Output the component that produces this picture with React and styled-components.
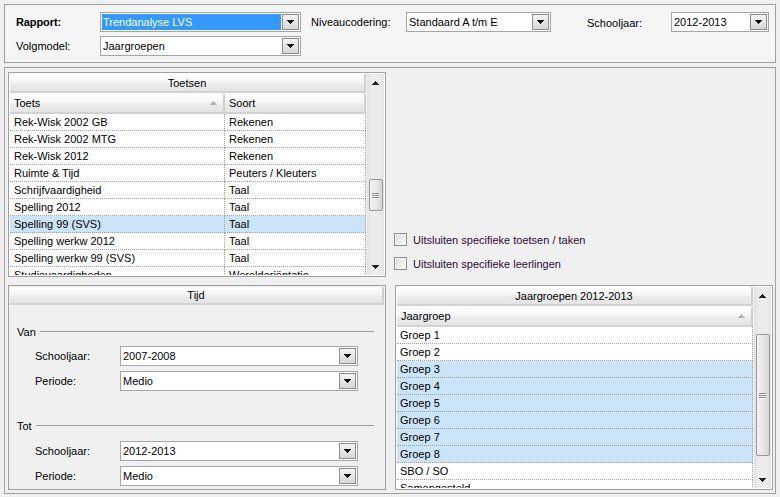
import React from 'react';
import styled, { createGlobalStyle } from 'styled-components';

const GlobalStyle = createGlobalStyle`
  html, body {
    margin: 0;
    padding: 0;
    background: #f0f0f0;
  }
  body {
    font-family: "Liberation Sans", Arial, sans-serif;
    font-size: 11px;
    color: #000;
  }
`;

const Page = styled.div`
  width: 780px;
  height: 497px;
  box-sizing: border-box;
  padding: 4px 4px 3px 4px;
  display: flex;
  flex-direction: column;
  gap: 4px;
  overflow: hidden;
`;

const TopPanel = styled.div`
  height: 59px;
  flex: none;
  box-sizing: border-box;
  border: 1px solid #a0a0a0;
  background: #f5f5f5;
  padding: 7px 0 0 11px;
  display: flex;
  flex-direction: column;
  gap: 4px;
`;

const FieldRow = styled.div`
  display: flex;
  align-items: center;
  height: 20px;
`;

const FieldLabel = styled.span`
  flex: none;
  width: ${p => p.$w}px;
  margin-left: ${p => p.$ml || 0}px;
  margin-top: ${p => p.$mt || 0}px;
  font-weight: ${p => (p.$bold ? 700 : 400)};
  letter-spacing: ${p => (p.$bold ? '-0.1px' : '0')};
  white-space: nowrap;
`;

const ComboBox = styled.div`
  flex: none;
  width: ${p => p.$w}px;
  height: 20px;
  box-sizing: border-box;
  border: 1px solid #a5a5a5;
  background: #fff;
  padding: 1px;
  display: flex;
  gap: 1px;
`;

const ComboText = styled.div`
  flex: 1;
  min-width: 0;
  padding-left: 1px;
  line-height: 16px;
  white-space: nowrap;
  overflow: hidden;
  background: ${p => (p.$selected ? '#3399ff' : 'transparent')};
  color: ${p => (p.$selected ? '#fff' : '#000')};
`;

const ComboButton = styled.div`
  width: 17px;
  height: 16px;
  flex: none;
  box-sizing: border-box;
  border: 1px solid #8c8c8c;
  background: linear-gradient(to bottom, #f4f4f4, #e6e6e6 50%, #d6d6d6);
  display: flex;
  align-items: center;
  justify-content: center;
`;

const MainPanel = styled.div`
  flex: 1;
  box-sizing: border-box;
  border: 1px solid #a0a0a0;
  padding: 4px 2px 2px 3px;
  display: grid;
  grid-template-columns: 378px 378px;
  grid-template-rows: 205px 205px;
  column-gap: 9px;
  row-gap: 8px;
`;

const Grid = styled.div`
  height: 100%;
  box-sizing: border-box;
  border: 1px solid #a0a0a0;
  background: #fff;
  padding: 1px;
  display: flex;
  overflow: hidden;
`;

const GridMain = styled.div`
  flex: 1;
  min-width: 0;
  display: flex;
  flex-direction: column;
  overflow: hidden;
`;

const headerLook = `
  box-sizing: border-box;
  background: linear-gradient(to bottom, #ffffff, #f6f6f7 45%, #ececed 55%, #e4e4e5);
  border-right: 2px solid #cfcfcf;
  border-bottom: 2px solid #d2d2d2;
`;

const GridTitle = styled.div`
  ${headerLook}
  height: 19px;
  flex: none;
  display: flex;
  align-items: center;
  justify-content: center;
`;

const HeaderRow = styled.div`
  height: 21px;
  flex: none;
  display: flex;
  padding-top: 1px;
  box-sizing: border-box;
`;

const HeaderCell = styled.div`
  ${headerLook}
  width: ${p => (p.$w ? `${p.$w}px` : 'auto')};
  flex: ${p => (p.$w ? 'none' : 1)};
  display: flex;
  align-items: center;
  justify-content: space-between;
  padding: 0 6px 0 4px;
`;

const Row = styled.div`
  height: 17px;
  flex: none;
  display: flex;
  background: ${p => (p.$selected ? '#cce4f7' : '#fff')};
`;

const Cell = styled.div`
  width: ${p => (p.$w ? `${p.$w}px` : 'auto')};
  flex: ${p => (p.$w ? 'none' : 1)};
  box-sizing: border-box;
  border-bottom: 1px dotted #a0a0a0;
  border-right: 1px dotted #a0a0a0;
  padding-left: ${p => p.$pl || 4}px;
  line-height: 16px;
  white-space: nowrap;
  overflow: hidden;
`;

const ScrollBar = styled.div`
  width: 17px;
  flex: none;
  display: flex;
  flex-direction: column;
  background: linear-gradient(to right, #e2e2e2, #ececec 30%, #ececec 70%, #e4e4e4);
  border-left: 1px solid #f2f2f2;
`;

const ScrollArrow = styled.div`
  height: 17px;
  flex: none;
  display: flex;
  align-items: center;
  justify-content: center;
`;

const ScrollTrack = styled.div`
  flex: 1;
  display: flex;
  flex-direction: column;
  align-items: center;
`;

const Thumb = styled.div`
  width: 14px;
  height: ${p => p.$size}px;
  margin-top: ${p => p.$offset}px;
  box-sizing: border-box;
  border: 1px solid #979797;
  border-radius: 2px;
  background: linear-gradient(to right, #f2f2f2, #e8e8e8 50%, #d4d4d4);
  display: flex;
  flex-direction: column;
  align-items: center;
  justify-content: center;
  gap: 1px;
`;

const Grip = styled.span`
  width: 7px;
  height: 1px;
  background: #8a8a8a;
  box-shadow: 0 1px 0 #f8f8f8;
`;

const CheckArea = styled.div`
  display: flex;
  flex-direction: column;
  justify-content: flex-end;
  gap: 11px;
  padding: 0 0 7px 0;
`;

const CheckRow = styled.label`
  display: flex;
  align-items: center;
  gap: 6px;
  height: 13px;
  margin-left: -1px;
  color: #2a0c33;
`;

const CheckBox = styled.span`
  width: 13px;
  height: 13px;
  flex: none;
  box-sizing: border-box;
  border: 1px solid #8e8f8f;
  background: linear-gradient(135deg, #d8d8d8, #f0f0f0 60%, #fdfdfd);
  box-shadow: inset 0 0 0 1px #f4f4f4;
`;

const Panel = styled.div`
  height: 100%;
  box-sizing: border-box;
  border: 1px solid #a0a0a0;
  padding: 1px;
  display: flex;
  flex-direction: column;
`;

const PanelTitle = styled(GridTitle)`
  height: 18px;
`;

const PanelBody = styled.div`
  padding: 0 10px 0 7px;
  display: flex;
  flex-direction: column;
`;

const GroupLabel = styled.div`
  display: flex;
  align-items: center;
  gap: 4px;
  height: 13px;
  margin-top: ${p => p.$mt}px;
  &::after {
    content: '';
    flex: 1;
    height: 1px;
    background: #a0a0a0;
  }
`;

const PanelFields = styled.div`
  display: flex;
  flex-direction: column;
  gap: 5px;
  margin-top: ${p => p.$mt}px;
  padding-left: 18px;
`;

const Triangle = ({ dir = 'down', color = '#000', w = 7, h = 4 }) => (
  <svg width={w} height={h} viewBox={`0 0 ${w} ${h}`} shapeRendering="crispEdges">
    <polygon
      points={dir === 'down' ? `0,0 ${w},0 ${w / 2},${h}` : `0,${h} ${w},${h} ${w / 2},0`}
      fill={color}
    />
  </svg>
);

function Combo({ width, value, selected }) {
  return (
    <ComboBox $w={width}>
      <ComboText $selected={selected}>{value}</ComboText>
      <ComboButton>
        <Triangle />
      </ComboButton>
    </ComboBox>
  );
}

function Scroll({ offset, size }) {
  return (
    <ScrollBar>
      <ScrollArrow>
        <Triangle dir="up" color="#222" />
      </ScrollArrow>
      <ScrollTrack>
        <Thumb $offset={offset} $size={size}>
          <Grip />
          <Grip />
          <Grip />
        </Thumb>
      </ScrollTrack>
      <ScrollArrow>
        <Triangle color="#222" />
      </ScrollArrow>
    </ScrollBar>
  );
}

const toetsen = [
  ['Rek-Wisk 2002 GB', 'Rekenen'],
  ['Rek-Wisk 2002 MTG', 'Rekenen'],
  ['Rek-Wisk 2012', 'Rekenen'],
  ['Ruimte & Tijd', 'Peuters / Kleuters'],
  ['Schrijfvaardigheid', 'Taal'],
  ['Spelling 2012', 'Taal'],
  ['Spelling 99 (SVS)', 'Taal', true],
  ['Spelling werkw 2012', 'Taal'],
  ['Spelling werkw 99 (SVS)', 'Taal'],
  ['Studievaardigheden', 'Wereldoriëntatie'],
];

const jaargroepen = [
  ['Groep 1'],
  ['Groep 2'],
  ['Groep 3', true],
  ['Groep 4', true],
  ['Groep 5', true],
  ['Groep 6', true],
  ['Groep 7', true],
  ['Groep 8', true],
  ['SBO / SO'],
  ['Samengesteld'],
];

function PeriodFields({ label, year, mt, fieldsMt }) {
  return (
    <>
      <GroupLabel $mt={mt}>{label}</GroupLabel>
      <PanelFields $mt={fieldsMt}>
        <FieldRow>
          <FieldLabel $w={85}>Schooljaar:</FieldLabel>
          <Combo width={238} value={year} />
        </FieldRow>
        <FieldRow>
          <FieldLabel $w={85}>Periode:</FieldLabel>
          <Combo width={238} value="Medio" />
        </FieldRow>
      </PanelFields>
    </>
  );
}

export default function App() {
  return (
    <Page>
      <GlobalStyle />
      <TopPanel>
        <FieldRow>
          <FieldLabel $w={84} $bold>Rapport:</FieldLabel>
          <Combo width={201} value="Trendanalyse LVS" selected />
          <FieldLabel $w={95} $ml={10}>Niveaucodering:</FieldLabel>
          <Combo width={145} value="Standaard A t/m E" />
          <FieldLabel $w={84} $ml={36} $mt={2}>Schooljaar:</FieldLabel>
          <Combo width={98} value="2012-2013" />
        </FieldRow>
        <FieldRow>
          <FieldLabel $w={84}>Volgmodel:</FieldLabel>
          <Combo width={201} value="Jaargroepen" />
        </FieldRow>
      </TopPanel>

      <MainPanel>
        <Grid>
          <GridMain>
            <GridTitle>Toetsen</GridTitle>
            <HeaderRow>
              <HeaderCell $w={215}>
                <span>Toets</span>
                <Triangle dir="up" color="#b4b4b4" />
              </HeaderCell>
              <HeaderCell>Soort</HeaderCell>
            </HeaderRow>
            {toetsen.map(([name, soort, sel]) => (
              <Row key={name} $selected={sel}>
                <Cell $w={215}>{name}</Cell>
                <Cell>{soort}</Cell>
              </Row>
            ))}
          </GridMain>
          <Scroll offset={88} size={32} />
        </Grid>

        <CheckArea>
          <CheckRow>
            <CheckBox />
            Uitsluiten specifieke toetsen / taken
          </CheckRow>
          <CheckRow>
            <CheckBox />
            Uitsluiten specifieke leerlingen
          </CheckRow>
        </CheckArea>

        <Panel>
          <PanelTitle>Tijd</PanelTitle>
          <PanelBody>
            <PeriodFields label="Van" year="2007-2008" mt={20} fieldsMt={8} />
            <PeriodFields label="Tot" year="2012-2013" mt={28} fieldsMt={9} />
          </PanelBody>
        </Panel>

        <Grid>
          <GridMain>
            <GridTitle>Jaargroepen 2012-2013</GridTitle>
            <HeaderRow>
              <HeaderCell>
                <span>Jaargroep</span>
                <Triangle dir="up" color="#b4b4b4" />
              </HeaderCell>
            </HeaderRow>
            {jaargroepen.map(([name, sel]) => (
              <Row key={name} $selected={sel}>
                <Cell $pl={3}>{name}</Cell>
              </Row>
            ))}
          </GridMain>
          <Scroll offset={30} size={122} />
        </Grid>
      </MainPanel>
    </Page>
  );
}
